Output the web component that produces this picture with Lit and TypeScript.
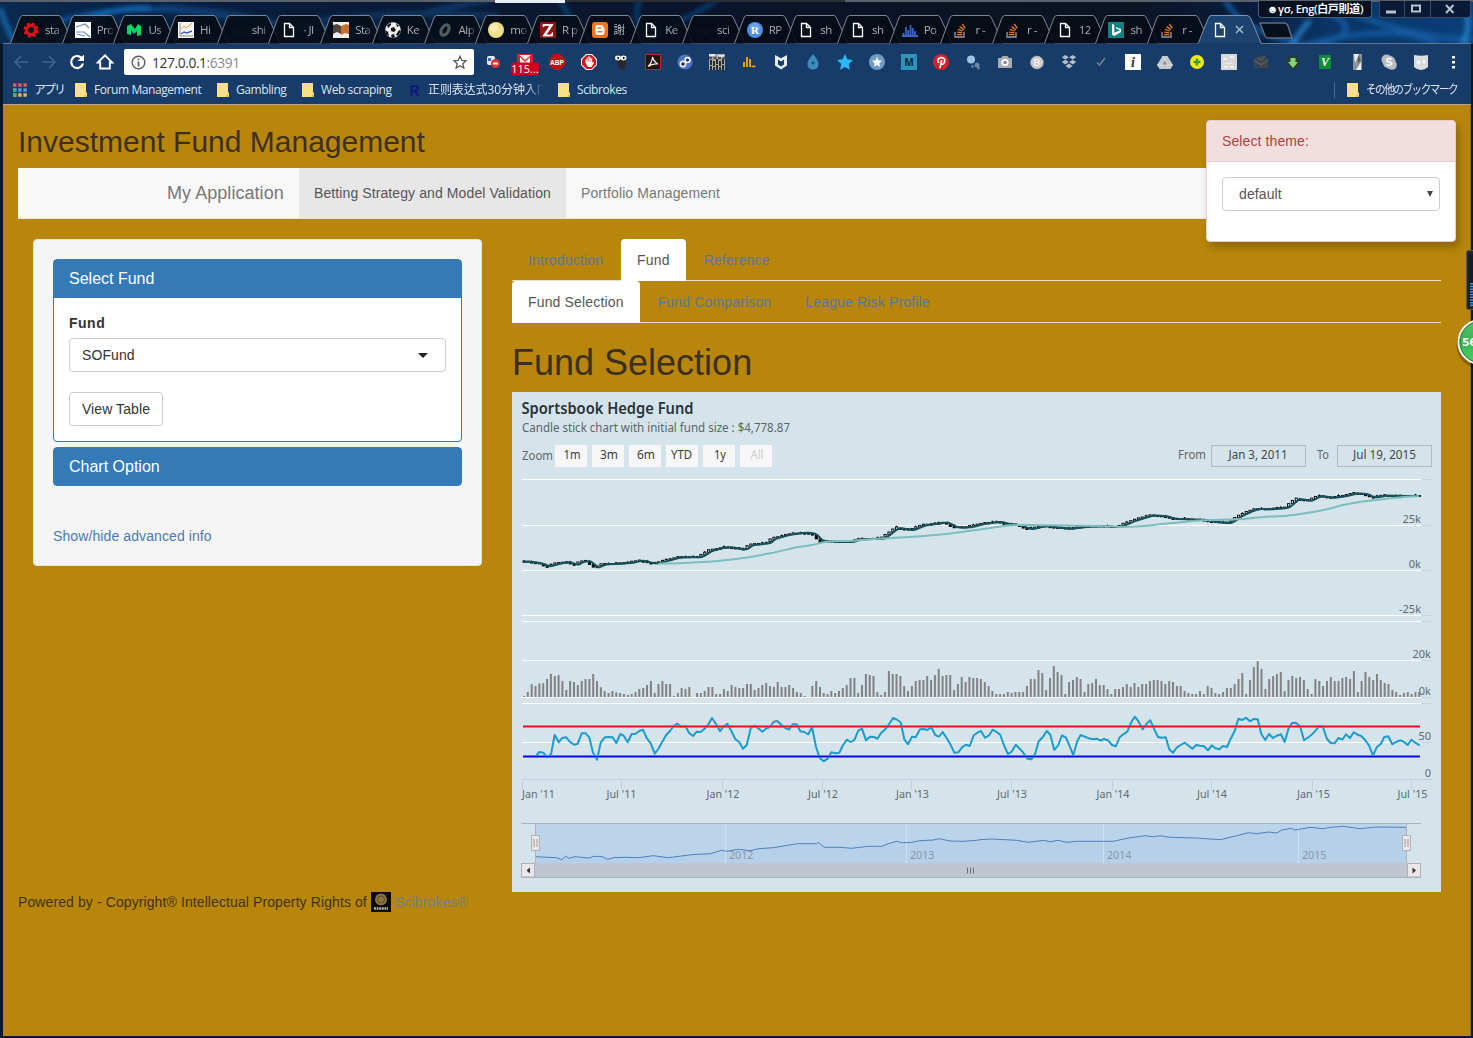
import { LitElement, html, svg, css } from "lit";
import { customElement } from "lit/decorators.js";

type Pt = [number, number];

/** Chart samples are stored at triple resolution, split in three runs. */
const RUNS = [0, 900, 1830];
const toPoints = (runs: string[], dx: number, dy: number, offsets = RUNS): Pt[] =>
  runs.flatMap((run, i) =>
    run.split(" ").map((p) => {
      const [x, y] = p.split(",").map(Number);
      return [(x + offsets[i]) / 3 + dx, y / 3 + dy] as Pt;
    })
  );
const join = (pts: Pt[]) => pts.map(([x, y]) => `${x.toFixed(1)},${y.toFixed(1)}`).join(" ");
const smooth = (pts: Pt[]) => {
  let d = `M${pts[0][0]},${pts[0][1]}`;
  for (let i = 0; i < pts.length - 1; i++) {
    const p0 = pts[Math.max(0, i - 1)], p1 = pts[i], p2 = pts[i + 1], p3 = pts[Math.min(pts.length - 1, i + 2)];
    const k = 7;
    d += `C${(p1[0] + (p2[0] - p0[0]) / k).toFixed(2)},${(p1[1] + (p2[1] - p0[1]) / k).toFixed(2)} ${(p2[0] - (p3[0] - p1[0]) / k).toFixed(2)},${(p2[1] - (p3[1] - p1[1]) / k).toFixed(2)} ${p2[0].toFixed(2)},${p2[1].toFixed(2)}`;
  }
  return d;
};
const yAt = (pts: Pt[], x: number) => {
  for (let i = 1; i < pts.length; i++) {
    if (x <= pts[i][0]) {
      const [x0, y0] = pts[i - 1], [x1, y1] = pts[i];
      return y0 + ((y1 - y0) * (x - x0)) / (x1 - x0);
    }
  }
  return pts[pts.length - 1][1];
};

const RSI = toPoints([
  "78,858 88,846 100,848 111,862 123,853 134,795 146,817 156,804 169,802 180,816 193,824 203,821 215,790 227,790 238,802 249,848 261,869 272,818 284,802 296,801 308,802 319,819 331,792 341,797 353,817 365,792 376,792 388,783 399,779 410,804 422,820 434,851 445,837 456,817 468,796 480,783 491,768 502,761 514,771 526,768 537,788 549,798 560,785 572,786 583,777 594,765 606,744 618,762 630,784 640,770 652,761 664,783 676,807 688,817 699,836 710,825 722,775 733,767 745,775 757,785 768,776 780,771 791,755 802,753 814,764 826,774 837,779 848,763 860,763 871,784 883,786 895,793 906,772",
  "18,830 29,864 41,874 53,866 64,847 76,850 88,848 99,826 110,809 122,816 133,810 145,782 156,776 168,811 180,800 192,801 202,806 214,788 226,778 237,763 249,744 261,749 272,757 283,808 294,823 306,800 317,802 330,778 341,777 352,780 364,772 376,795 387,800 398,786 410,805 422,825 433,848 445,847 456,832 468,824 479,828 491,796 502,788 513,783 525,803 536,797 548,779 560,786 571,795 583,828 594,852 606,844 617,824 629,836 640,848 652,866 664,868 675,853 686,814 698,802 710,783 721,794 733,840 745,825 756,796 768,803 779,829 790,855 802,813 812,795 824,800 836,805 848,808 860,806 871,812 882,807 894,811 906,825 917,829 929,802",
  "10,793 22,785 34,757 44,740 55,753 68,778 79,762 91,751 102,776 114,801 125,803 137,802 148,838 159,848 171,832 182,825 194,818 206,827 217,836 229,825 240,827 252,829 264,841 275,826 286,835 298,838 309,828 321,831 332,806 344,783 355,746 367,750 378,743 390,754 401,747 413,748 424,792 436,810 447,792 459,804 470,797 483,793 494,816 505,778 516,759 527,758 540,768 552,811 563,803 575,794 587,781 598,768 609,772 621,807 632,819 644,820 655,804 667,809 678,793 690,804 701,787 713,794 724,798 736,811 747,826 759,857 770,832 782,822 793,801 805,799 817,823 828,816 840,811 851,815 863,825 874,809 886,818 899,826",
], -2, 78);

const SMA = toPoints([
  "38,276 62,275 100,281 122,289 150,281 180,277 205,284 220,276 240,274 255,284 268,292 290,283 320,282 370,278 400,272 435,280 460,277 480,271 520,262 575,261 610,242 660,232 710,238 730,226 780,219 800,206 860,191 915,191",
  "40,212 80,215 125,216 160,208 220,206 240,195 270,175 310,180 345,167 390,161 415,158 442,171 480,172 520,163 570,156 605,163 635,166 665,177 710,169 760,174 790,176 830,171 880,169 929,171",
  "10,168 50,152 100,137 140,139 170,146 255,150 290,156 335,158 370,137 415,118 450,118 505,113 540,88 575,92 605,79 645,83 680,78 710,71 740,72 768,82 800,77 840,78 898,78",
], -2, 78);

const LONG_SMA = toPoints([
  "445,281 520,279 630,272 700,264 780,250 860,232",
  "0,226 60,214 120,213 180,208 300,201 400,193 500,180 600,166 660,165 720,166 900,169",
  "0,171 60,169 150,160 250,151 350,148 430,141 500,137 560,129 610,120 680,103 740,93 800,86 860,80 898,79",
], -2, 78);

const NAVIGATOR = toPoints([
  "77,230 140,233 155,239 167,228 176,235 195,230 237,234 252,229 277,230 293,238 312,233 345,232 385,233 430,227 475,233 545,224 600,221 635,211 650,214 685,208 720,212 745,206 790,203 820,198 862,191 920,191 925,187 943,202 990,202 1025,205 1075,199 1115,199 1135,191 1160,184 1175,188 1205,187 1230,182 1270,180 1288,176 1320,183 1360,184 1400,181",
  "30,179 65,177 140,181 175,187 220,181 240,185 265,181 290,187 320,184 430,184 475,174 525,167 550,170 570,167 600,172 680,174 750,179 800,167 835,158 860,161 895,156 920,159 935,150 965,145 975,150 1020,142 1060,146 1080,142 1120,139 1170,146 1220,141 1309,142",
], -2, 388, [0, 1380]);

const VOLUME: { from: number; to: number; h: number[] }[] = [
  { from: 42, to: 930, h: [3,15,38,33,41,41,54,69,63,66,48,21,48,45,36,48,54,54,69,48,29,18,12,18,14,12,9,6,9,15,24,27,36,48,12,39,48,39,39,3,12,27,24,30,0,12,12,18,30,30,9,9,24,18,36,30,27,27,39,39,21,27,36,42,33,30,45,30,30,36,27,15,12,3,0,33,48,30] },
  { from: 941, to: 1827, h: [12,9,18,12,18,27,36,57,57,12,36,69,66,63,15,6,15,78,69,69,63,33,18,33,48,51,51,63,51,66,84,63,66,66,21,39,60,45,60,57,57,54,45,33,18,9,9,9,15,12,15,15,15,33,54,54,81,72,21,57,93,75,66,9,45,51,60,54,15,39,42,54,36,36,24,9,24,24] },
  { from: 1839, to: 2728, h: [30,39,30,42,30,39,39,48,51,51,48,39,48,45,33,33,18,12,9,9,18,9,33,27,12,9,15,27,27,39,54,72,9,51,90,108,84,24,54,63,69,75,18,51,63,57,60,51,24,9,54,48,33,48,60,48,48,57,60,54,78,15,48,75,60,51,69,51,42,39,21,15,6,12,15,9,15,15] },
];
const BARS: Pt[] = VOLUME.flatMap(({ from, to, h }) =>
  h.map((v, i) => [(from + ((to - from) * i) / (h.length - 1)) / 3 - 2, v / 3] as Pt)
);

const page = svg`<path d="M3.5 1.5h5l4 4v9h-9z M8.5 1.5v4h4" fill="none" stroke="#fff" stroke-width="1.3"/>`;
const stack = svg`<path d="M2 10v5h9v-5" fill="none" stroke="#9a9a9a" stroke-width="1.3"/><path d="M4 12.6h5.3M4.2 10.2l5.2.6M4.9 7.4l5 1.6M6.6 4.6l4.3 3M9.3 1.8l3 4.6" stroke="#e87a24" stroke-width="1.3"/>`;
const dim = svg`<path d="M3 8l3 1 3-1 2 2 3-4v4l-4 2-5-1z" fill="#0c131c"/>`;

const FAVICONS: Record<string, unknown> = {
  gear: svg`<circle cx="8" cy="8" r="4.4" fill="none" stroke="#d9141c" stroke-width="3"/><circle cx="8" cy="8" r="6.4" fill="none" stroke="#d9141c" stroke-width="2.4" stroke-dasharray="3 2.02"/>`,
  sheet: svg`<rect width="16" height="16" fill="#fff"/><path d="M1 5l9-3 4 4M1 10h8l6 5M2 12l8 2" stroke="#6e8cae" stroke-width="1.2" fill="none"/>`,
  medium: svg`<path d="M1 4l4-2 4 5 3-5 3 2v9l-4 1V9l-3 3-3-4v5l-4-1z" fill="#02d968"/>`,
  lines: svg`<rect width="16" height="16" fill="#f6f6f2"/><path d="M2 1v13h13" stroke="#888" fill="none"/><path d="M3 7l3-3 2 2 3-2 3-3" stroke="#dca040" fill="none"/><path d="M3 12l3-2 3 1 5-2" stroke="#4060c0" fill="none" stroke-width="1.4"/>`,
  dim, page, stack,
  book: svg`<rect width="16" height="16" fill="#f4eee8"/><path d="M0 3l4-1 4 2v8l-4-2-4 2z" fill="#56443c"/><path d="M8 4l5-2 3 1v9l-4-1-4 2z" fill="#c8702c"/>`,
  ball: svg`<circle cx="8" cy="8" r="7.8" fill="#eee"/><path d="M6 6l3-1 2 3-2 2-3-1zM2 3l4-2v2L3 6zM11 1l3 3-2 1zM0 8l3 2 1 4-3-2zM14 8l2 1-3 5-2-1zM6 13l3-1 1 3-3 1z" fill="#111"/>`,
  loop: svg`<ellipse cx="8" cy="8" rx="3.4" ry="5.6" transform="rotate(30 8 8)" fill="none" stroke="#4e5b5e" stroke-width="3.2"/>`,
  moon: svg`<circle cx="8" cy="8" r="8" fill="#f0e08e"/><circle cx="6" cy="6" r="4" fill="#f8ecae"/>`,
  z: svg`<rect width="16" height="16" fill="#8c1414"/><path d="M3 5V2.500h10L6 13h5l1.500-2.500V14H3L10 3.500H5z" fill="#fff" stroke="#fff" stroke-width=".8"/>`,
  blogger: svg`<rect width="16" height="16" rx="3" fill="#f5751c"/><path d="M5 3h4q2.500 0 2.500 2.500l1 1V10q0 3-3 3H6q-2.500 0-2.500-2.500V5q0-2 1.500-2z" fill="#fff"/><path d="M6 6h2.400M6 9.800h4" stroke="#f5751c" stroke-width="1.500" stroke-linecap="round"/>`,
  r: svg`<circle cx="8" cy="8" r="8" fill="#4d8fe0"/><circle cx="8" cy="6" r="5" fill="#6aa6ee"/><text x="8" y="12" class="gr">R</text>`,
  hist: svg`<path d="M0 14h16M1.500 14v-3M4 14V5M6.200 14V8M8.500 14V3M10.800 14V6M13 14V9" stroke="#3a64c8" stroke-width="1.8"/>`,
  bing: svg`<rect width="16" height="16" fill="#0c8484"/><path d="M4 2l2.300.8v8L12 8.200 8.500 6.800 7.600 5l5.400 2v3L6.300 14 4 12.600z" fill="#fff"/>`,
};

const TABS: [string, string][] = [
  ["gear", "sta"], ["sheet", "Pro"], ["medium", "Us"], ["lines", "Hi"], ["dim", "shi"], ["page", "· JI"],
  ["book", "Sta"], ["ball", "Ke"], ["loop", "Alp"], ["moon", "mo"], ["z", "R p"], ["blogger", "謝"],
  ["page", "Ke"], ["dim", "sci"], ["r", "RP"], ["page", "sh"], ["page", "sh"], ["hist", "Po"],
  ["stack", "r -"], ["stack", "r -"], ["page", "12"], ["bing", "sh"], ["stack", "r -"],
];

const EXTENSIONS = [
  svg`<rect x="2" y="2" width="8" height="9" rx="2" fill="#e8ecf4"/><path d="M3 4h3v3H3z" fill="#2c6cd0"/><circle cx="10.500" cy="9.500" r="4.500" fill="#e0303a"/><path d="M8 9.500h5" stroke="#fff" stroke-width="2"/>`,
  svg`<rect x="0" y="0" width="16" height="9" fill="#d8202c"/><path d="M2 1h12v8H2z" fill="#f8eeee"/><path d="M1 0l7 6 7-6v9h-2V3L8 8 3 3v6H1z" fill="#d8202c"/><rect x="-6" y="8.500" width="28" height="12.500" rx="2" fill="#d0021b"/><text x="8" y="18.500" class="badge">115...</text>`,
  svg`<path d="M5 0h6l5 5v6l-5 5H5l-5-5V5z" fill="#c70d12"/><text x="8" y="10.700" class="abp" textLength="14" lengthAdjust="spacingAndGlyphs">ABP</text>`,
  svg`<path d="M5 0h6l5 5v6l-5 5H5l-5-5V5z" fill="#f4f4f4"/><path d="M5.500 1h5L15 5.500v5L10.500 15h-5L1 10.500v-5z" fill="#d8121c"/><path d="M4.500 9V5.500h1.300V3.500h1.400V2.500h1.400v1h1.400v1h1.200v4l1-.5q1 0 .6 1L10.500 13H7z" fill="#fff"/><path d="M6 4v4M7.500 3v5M9 4v4" stroke="#d8121c" stroke-width=".4"/>`,
  svg`<path d="M3 5q5-3 10-1v7q-1 5-4 5-4-1-6-11z" fill="#28282c"/><ellipse cx="5" cy="4" rx="3" ry="2.400" fill="#eee"/><ellipse cx="10.500" cy="4" rx="3" ry="2.400" fill="#eee"/><path d="M4.500 3h1.500v2H4.500zM10 3h1.500v2H10z" fill="#111"/>`,
  svg`<path d="M.5.500h15v15H.5z" fill="#221214" stroke="#c82030"/><path d="M7.500 3q1.500 5 5.500 7-5-1-10 2.500Q7 9 7.500 3z" fill="none" stroke="#eee" stroke-width="1.200"/>`,
  svg`<circle cx="8" cy="8" r="7.500" fill="#4e76c8"/><circle cx="6" cy="10" r="2.600" fill="#1c2c54" stroke="#eef" stroke-width="1.600"/><circle cx="10.500" cy="6" r="2.400" fill="#1c2c54" stroke="#eef" stroke-width="1.600"/>`,
  svg`<rect width="16" height="16" fill="#a8a8a4"/><path d="M0 1h6M9 2h6" stroke="#e8e8e4" stroke-width="2"/><path d="M0 4h16" stroke="#555" stroke-dasharray="3 1.500" stroke-width="2.500"/><path d="M2 6v10M5 7v9M8 5v11M11 7v9M14 5v11" stroke="#292c2c" stroke-width="2" stroke-dasharray="5 1"/>`,
  svg`<path d="M3 13V8M6 13V3M9 13V5" stroke="#f4a81c" stroke-width="1.800"/><path d="M10.500 12.400h4" stroke="#f4a81c" stroke-width="1.600"/>`,
  svg`<path d="M2 1l6 3.200L14 1v10.500L8 15.500l-6-4z" fill="#e8eaee"/><path d="M5 5.500l3 2 3-2v5L8 12.500l-3-2z" fill="#183c6a"/>`,
  svg`<path d="M8 0q6 7 5.500 10.500Q13 15.500 8 15.500t-5.500-5Q2 7 8 0z" fill="#3a8cb8"/><circle cx="8" cy="9" r="1.500" fill="#1c4c74"/>`,
  svg`<path d="M8 0l2.400 5.300 5.600.7-4.200 4 1.100 5.800L8 13l-4.900 2.800L4.200 10 0 6l5.600-.7z" fill="#2cb8f4"/>`,
  svg`<circle cx="8" cy="8" r="8" fill="#6f9cc4"/><path d="M8 3l1.500 3.300 3.500.4-2.600 2.500.7 3.600L8 11l-3.100 1.800.7-3.600L3 6.700l3.500-.4z" fill="#fff"/>`,
  svg`<rect width="16" height="16" fill="#2c94b8"/><text x="8" y="12" class="m">M</text>`,
  svg`<circle cx="8" cy="8" r="8" fill="#d8202c"/><path d="M7 14l1.700-8M5.500 9Q3.500 4.500 8 3.700q4-.2 3.800 3-.7 4-3.600 3.300" fill="none" stroke="#fff" stroke-width="1.700"/>`,
  svg`<circle cx="6" cy="5.500" r="4" fill="#9cc4e4"/><circle cx="12" cy="11" r="2.500" fill="#6c86a8"/><circle cx="7.500" cy="12.500" r="1.600" fill="#5878a0"/><circle cx="13.500" cy="14" r="1.400" fill="#6c86a8"/>`,
  svg`<path d="M1 4h3l1.500-2h5L12 4h3v10H1z" fill="#a8acb0"/><circle cx="8" cy="8.500" r="3.600" fill="#fff"/><circle cx="8" cy="8.500" r="1.800" fill="#82868a"/>`,
  svg`<circle cx="8" cy="8.500" r="6.500" fill="#ccc"/><circle cx="8" cy="8.500" r="6.500" fill="none" stroke="#aaa" stroke-dasharray="1 1"/><path d="M6 5.500h3q2 1.500 0 3 2 1.500 0 3H6zM6 8.500h3" fill="none" stroke="#f6f6f6" stroke-width="1.200"/>`,
  svg`<path d="M4.300 1l3.500 2.300L4.300 5.600.8 3.300zM11.700 1l3.500 2.300-3.500 2.300-3.500-2.300zM4.300 5.800l3.500 2.300-3.500 2.300L.8 8.100zM11.700 5.800l3.500 2.300-3.500 2.300-3.500-2.300zM8 9.500l3.500 2.400L8 14.500l-3.500-2.600z" fill="#b4bcc8"/>`,
  svg`<path d="M4 8.500l2.500 2.500L12 4" fill="none" stroke="#74808c" stroke-width="1.500"/>`,
  svg`<rect width="16" height="16" fill="#fff"/><text x="8" y="12.500" class="i">i</text>`,
  svg`<path d="M5.500 2h5L16 11l-2.500 4h-11L0 11z" fill="#c4c8cc"/><path d="M8 6.500l2.500 4.500h-5z" fill="#7c8894"/><path d="M5.500 2l5.500 9M0 11h16" stroke="#e0e2e4" stroke-width=".8"/>`,
  svg`<circle cx="8" cy="8" r="7" fill="#f0e814"/><path d="M8 4.500v7M4.500 8h7" stroke="#3c9c30" stroke-width="2.400"/>`,
  svg`<rect width="16" height="16" fill="#d8d8d8"/><path d="M2 4h4v2H2zM9 2h4v2H9zM4 9h7v1H4zM3 12h4v2H3zM9 12h4v2H9z" fill="#efefef"/>`,
  svg`<path d="M1 5l7-4 7 4v9H1z" fill="#3c444c"/><path d="M1 6l7 5 7-5M5 4l3 2 4-4" fill="none" stroke="#5a626a" stroke-width="1.100"/>`,
  svg`<circle cx="8" cy="8" r="7" fill="#243c3c"/><path d="M5.500 4h5v4H13l-5 6-5-6h2.500z" fill="#84d46c"/>`,
  svg`<rect x="2" y="1" width="12" height="14" fill="#0c8c34"/><text x="8" y="12" class="v">V</text>`,
  svg`<rect x="4" y="0" width="9" height="16" fill="#8a929a"/><path d="M5 0h5L6 9zM7 16l5-8v8z" fill="#eef0f2"/><path d="M9 1l3 5-3 3z" fill="#555"/>`,
  svg`<circle cx="5.500" cy="5.500" r="5" fill="#b8bcc0"/><circle cx="11" cy="11" r="4.800" fill="#b8bcc0"/><circle cx="8" cy="8" r="6.500" fill="#b8bcc0"/><path d="M10.800 5.500Q8 3.500 6 5.300q-1 2 2 2.600 3.600.7 2.400 2.600-2 1.700-5-.2" fill="none" stroke="#fff" stroke-width="1.500"/>`,
  svg`<path d="M1 1q7 1.500 14 0v12q-3 3-7 3t-7-3z" fill="#dcdee0"/><path d="M3 6h5v5H3zM9 5h4v5H9z" fill="#f4f4f4" stroke="#c0c4c8" stroke-width=".6"/>`,
];

@customElement("browser-chrome")
class BrowserChrome extends LitElement {
  static styles = css`
    :host { display: block; height: 105px; color: #dde4ee; font: 12px "Open Sans", "Noto Sans", "Noto Sans CJK JP", sans-serif; letter-spacing: 0; position: relative; }
    svg { display: block; overflow: visible; }
    .sky { position: absolute; inset: 0; z-index: 0; }
    .sky svg { overflow: hidden; }
    .strip { position: relative; height: 44px; display: flex; align-items: flex-end; padding-left: 10px; box-sizing: border-box; }
    .tab { width: 51.7px; height: 28px; flex: none; position: relative; display: flex; align-items: center; box-sizing: border-box; padding: 2px 0 0 13px; margin-bottom: 1px; color: #a9adb3; }
    .shape { position: absolute; left: 0; top: 0; }
    .fav { position: relative; flex: none; width: 16px; height: 16px; }
    .label { position: relative; margin-left: 6px; width: 17px; overflow: hidden; white-space: nowrap; font-size: 11.500px; letter-spacing: -.5px; line-height: 16px; -webkit-mask-image: linear-gradient(90deg, #000 60%, rgba(0, 0, 0, .2)); }
    .close { position: relative; margin-left: 7px; }
    .plus { margin: 0 0 5px 8px; }
    .window { position: absolute; top: 1px; right: 2px; display: flex; gap: 7px; height: 17px; }
    .user { box-sizing: border-box; width: 114px; border: 1px solid #4b5c76; border-top: 0; border-radius: 0 0 4px 4px; background: #07101f; color: #fff; font-size: 11px; line-height: 16px; text-align: center; white-space: nowrap; font-weight: 600; letter-spacing: -.3px; }
    .controls { display: flex; border: 1px solid #3c4c66; border-top: 0; border-radius: 0 0 4px 4px; background: #091a36; width: 92px; box-sizing: border-box; }
    .tools { position: relative; height: 37px; background: #183c6a; margin-left: 3px; margin-right: 2px; display: flex; align-items: center; padding-left: 10px; padding-bottom: 1px; box-sizing: border-box; }
    .nav { display: flex; gap: 12px; width: 111px; }
    .url { width: 350px; height: 26px; box-sizing: border-box; background: #fff; border-radius: 2px; display: flex; align-items: center; padding: 0 7px; color: #333; font-size: 13.800px; letter-spacing: -.4px; }
    .url b { font-weight: 400; color: #888; flex: 1; }
    .addr { margin-left: 6px; }
    .ext { display: flex; gap: 16px; margin-left: 11px; }
    .menu { margin-left: 21px; }
    .badge { font: 11px "Open Sans", sans-serif; fill: #fff; text-anchor: middle; }
    .abp { font: bold 8px "Liberation Sans", sans-serif; fill: #fff; text-anchor: middle; }
    .m { font: bold 11px "Liberation Sans", sans-serif; fill: #10243c; text-anchor: middle; }
    .i { font: italic bold 14px "Liberation Serif", serif; fill: #333; text-anchor: middle; }
    .v { font: italic bold 12px "Liberation Serif", serif; fill: #fff; text-anchor: middle; }
    .gr { font: bold 11px "Liberation Serif", serif; fill: #fff; text-anchor: middle; }
    .marks { position: relative; height: 23px; background: #183c6a; border-bottom: 1px solid #b9a98c; margin-left: 3px; margin-right: 2px; display: flex; align-items: center; padding-left: 10px; white-space: nowrap; letter-spacing: -.42px; }
    .mark { display: flex; align-items: center; gap: 7px; padding-bottom: 5px; flex: none; line-height: 18px; box-sizing: border-box; }
    .m0 { width: 62px; letter-spacing: -2px; } .m1 { width: 142px; } .m2 { width: 85px; } .m3 { width: 107px; } .m4 { width: 149px; letter-spacing: -.1px; }
    .fade { width: 116px; overflow: hidden; -webkit-mask-image: linear-gradient(90deg, #000 85%, transparent); }
    .grow { flex: 1; }
    .other { border-left: 1px solid #4c6a92; padding-left: 12px; height: 16px; margin-bottom: 5px; padding-bottom: 0; width: 137px; letter-spacing: -1.700px; }
    .narrow { transform: scaleX(.885); transform-origin: left; }
  `;

  private folder = svg`<svg width="12" height="14" viewBox="0 0 12 14"><path d="M0 0h11v9l1 1v4H0z" fill="#fbdf87"/><path d="M9 14l2-4 1 4z" fill="#eabf50"/></svg>`;

  render() {
    return html`
      <div class="sky">
        <svg width="1473" height="105">
          <defs>
            <linearGradient id="sky"><stop offset="0" stop-color="#0b2a50"/><stop offset=".12" stop-color="#081e40"/><stop offset=".3" stop-color="#0a1a34"/><stop offset=".5" stop-color="#0a142a"/><stop offset=".75" stop-color="#0c1322"/><stop offset=".85" stop-color="#0a1c3c"/><stop offset=".9" stop-color="#0a3464"/><stop offset="1" stop-color="#0a3e78"/></linearGradient>
            <filter id="soft" x="-5%" width="110%" y="-20%" height="140%"><feGaussianBlur stdDeviation="2.400"/></filter>
          </defs>
          <rect width="1473" height="105" fill="url(#sky)"/>
          <g fill="none" filter="url(#soft)">
            <path d="M50 24Q120 0 220 15T500 46" stroke="#0c5ca8" stroke-width="4"/>
            <path d="M0 8Q8 34 20 50M55 46Q90 6 150 8" stroke="#1878c8" stroke-width="4"/>
            <path d="M160 6Q280 14 330 46M200 46Q320 6 500 16M350 40Q400 14 490 0" stroke="#0c3462" stroke-width="6"/>
            <path d="M560 0Q570 20 590 46M715 2Q670 26 640 46M640 0Q630 20 650 46" stroke="#10549a" stroke-width="3"/>
            <path d="M1225 0Q1240 30 1300 44M1270 0Q1390 20 1320 46M1300 46Q1400 20 1440 46M1330 4Q1400 36 1473 40" stroke="#125aa0" stroke-width="5"/>
            <path d="M1460 0Q1475 20 1462 46M1310 20L1290 46" stroke="#2a8ad4" stroke-width="4"/>
          </g>
          <rect y="44" width="3" height="61" fill="#0a1526"/><rect x="1471" y="44" width="2" height="61" fill="#0a1526"/>
          <rect width="1473" height="2" fill="#59616c"/><rect x="565" width="280" height="2" fill="#2c3036"/><rect x="495" width="70" height="3" fill="#e6eef8"/>
          <path d="M3 43.500H1471" stroke="#66788f"/>
        </svg>
      </div>
      <div class="strip">
        ${TABS.map(([icon, label]) => html`
          <div class="tab">
            <svg class="shape" width="64" height="28"><path d="M.5 28.500L9.500 4Q10.500.5 12.500.5H49Q50.500.5 52 4L63 28.500" fill="#060c16" fill-opacity=".88" stroke="#7d858f"/></svg>
            <svg class="fav" viewBox="0 0 16 16">${FAVICONS[icon]}</svg><span class="label">${label}</span>
          </div>`)}
        <div class="tab">
          <svg class="shape" width="66" height="29"><path d="M-1 29L9 4Q10 .5 12 .5H48Q50.500.5 52 4L62.500 29" fill="#1c426f" stroke="#7f93ad"/><path d="M-.5 28H62V30H-1z" fill="#183c6a"/></svg>
          <svg class="fav" viewBox="0 0 16 16">${page}</svg>
          <svg class="close" width="10" height="10"><path d="M1 1l7 7M8 1L1 8" stroke="#aab6c6" stroke-width="1.500"/></svg>
        </div>
        <svg class="plus" width="36" height="17"><path d="M1 1H25Q28 1 29 4L33 16H9Q7 16 6 14z" fill="#08101e" stroke="#5f6d80" stroke-width="1.500"/></svg>
      </div>
      <div class="window">
        <div class="user">☻γσ, Eng(白戸則道)</div>
        <div class="controls"><svg width="90" height="16">
          <path d="M24.500 0v16M50.500 0v16" stroke="#3c4c66"/>
          <path d="M6 9.500h10v3H6z" fill="#b9c2ce"/><path d="M32 4.500h8v6h-8z" fill="none" stroke="#b9c2ce" stroke-width="2"/>
          <path d="M66 4l7.500 8M73.500 4L66 12" stroke="#b9c2ce" stroke-width="2"/></svg></div>
      </div>
      <div class="tools">
        <div class="nav">
          <svg width="16" height="16"><path d="M15 8H2M8 2L2 8l6 6" fill="none" stroke="#3f618c" stroke-width="1.700"/></svg>
          <svg width="16" height="16"><path d="M1 8h13M8 2l6 6-6 6" fill="none" stroke="#3f618c" stroke-width="1.700"/></svg>
          <svg width="16" height="16"><path d="M13.500 5.200A6 6 0 1 0 14 9.500" fill="none" stroke="#fff" stroke-width="2.200"/><path d="M15 .5v6.500H8.500z" fill="#fff"/></svg>
          <svg width="16" height="16"><path d="M.8 8.500L8 1.300l7.200 7.200H12.800V14.500H3.200V8.500z" fill="none" stroke="#fff" stroke-width="1.900"/></svg>
        </div>
        <div class="url">
          <svg width="15" height="15"><circle cx="7.500" cy="7.500" r="6.300" fill="none" stroke="#5c5c5c" stroke-width="1.400"/><path d="M7.500 6.500v5M7.500 3.500v1.700" stroke="#5c5c5c" stroke-width="1.700"/></svg>
          <span class="addr">127.0.0.1</span><b>:6391</b>
          <svg width="14" height="14" viewBox="0 0 16 16"><path d="M8 1.500l2 4.600 5 .5-3.800 3.300 1.200 5L8 12.300 3.600 14.900l1.200-5L1 6.600l5-.5z" fill="none" stroke="#5c5c5c" stroke-width="1.500"/></svg>
        </div>
        <div class="ext">${EXTENSIONS.map((e) => html`<svg width="16" height="16">${e}</svg>`)}</div>
        <svg class="menu" width="6" height="16"><path d="M2 2h3v2.600H2zM2 7h3v2.600H2zM2 12h3v2.600H2z" fill="#fff"/></svg>
      </div>
      <div class="marks">
        <div class="mark m0"><svg width="14" height="14"><path d="M0 2h14" stroke="#e05a5a" stroke-width="3.400" stroke-dasharray="3.400 1.800"/><path d="M0 7h14" stroke="#4a9ae8" stroke-width="3.400" stroke-dasharray="3.400 1.800"/><path d="M0 12h14" stroke="#e8b850" stroke-width="3.400" stroke-dasharray="3.400 1.800"/><path d="M0 7h3.400M0 12h3.400" stroke="#48b070" stroke-width="3.400"/></svg>アプリ</div>
        <div class="mark m1">${this.folder}Forum Management</div>
        <div class="mark m2">${this.folder}Gambling</div>
        <div class="mark m3">${this.folder}Web scraping</div>
        <div class="mark m4"><svg width="12" height="14"><path d="M2.500 13V3H7Q9.500 3 9 5.500T6 8H2.500M6 8L9 13" fill="none" stroke="#101878" stroke-width="2"/></svg><span class="fade">正则表达式30分钟入门</span></div>
        <div class="mark">${this.folder}Scibrokes</div>
        <div class="grow"></div>
        <div class="mark other">${this.folder}<span class="narrow">その他のブックマーク</span></div>
      </div>`;
  }
}

const CHART_BUTTONS: [string, number, number][] = [["1m", 43, 17], ["3m", 80, 18], ["6m", 117, 18], ["YTD", 154, 21], ["1y", 191, 12], ["All", 228, 13]];
const AXIS: [string, number, number][] = [
  ["Jan '11", 10, 26.500], ["Jul '11", 109, 109.500], ["Jan '12", 210.500, 211], ["Jul '12", 310.500, 311], ["Jan '13", 399.500, 400.500],
  ["Jul '13", 499.500, 500], ["Jan '14", 600.500, 601], ["Jul '14", 699.500, 700], ["Jan '15", 800.500, 801.500], ["Jul '15", 899.500, 900.500],
];

@customElement("stock-chart")
class StockChart extends LitElement {
  static styles = css`
    :host { display: block; width: 929px; height: 500px; background: #d5e4eb; letter-spacing: 0; }
    svg { display: block; }
    text { font-family: "Noto Sans", "Open Sans", sans-serif; font-size: 11px; fill: #3e576f; }
    .title { font-size: 15.500px; font-weight: 600; fill: #2b3338; }
    .sub { font-size: 12px; fill: #5b6469; }
    .btn { font-size: 12px; fill: #3c3c3c; }
    .off { fill: #ccc; }
    .lab { font-size: 12px; fill: #666; }
    .date { font-size: 12px; fill: #444; }
    .tick { font-size: 11px; fill: #606a70; }
    .year { font-size: 11.500px; fill: #8597a8; }
    .mid { text-anchor: middle; }
    .end { text-anchor: end; }
  `;

  render() {
    const handle = (x: number) => svg`<rect x="${x - 4}" y="443.500" width="8" height="15" fill="#ebe7e8" stroke="#b2b1b6"/><path d="M${x - 1.500} 447v8M${x + 1.500} 447v8" stroke="#999"/>`;
    return html`<svg width="929" height="500">
      <text class="title" x="9.500" y="22" textLength="172" lengthAdjust="spacingAndGlyphs">Sportsbook Hedge Fund</text>
      <text class="sub" x="10" y="40" textLength="268" lengthAdjust="spacingAndGlyphs">Candle stick chart with initial fund size : $4,778.87</text>
      <text class="lab" x="10" y="68" textLength="31" lengthAdjust="spacingAndGlyphs">Zoom</text>
      ${CHART_BUTTONS.map(([t, x, w]) => svg`<rect x="${x}" y="53" width="32" height="22" fill="#f7f7f7"/><text class="btn mid ${t === "All" ? "off" : ""}" x="${x + (t === "YTD" ? 15.500 : 17)}" y="67" textLength="${w}" lengthAdjust="spacingAndGlyphs">${t}</text>`)}
      <text class="lab" x="666" y="67" textLength="28" lengthAdjust="spacingAndGlyphs">From</text>
      <rect x="699.500" y="53.500" width="94" height="21" fill="none" stroke="#b0bcc2"/>
      <text class="date mid" x="746" y="67" textLength="59" lengthAdjust="spacingAndGlyphs">Jan 3, 2011</text>
      <text class="lab" x="805" y="67" textLength="12" lengthAdjust="spacingAndGlyphs">To</text>
      <rect x="825.500" y="53.500" width="94" height="21" fill="none" stroke="#b0bcc2"/>
      <text class="date mid" x="872.500" y="67" textLength="63" lengthAdjust="spacingAndGlyphs">Jul 19, 2015</text>

      ${[87.500, 133.500, 178.500, 223.500, 229.500, 268.500, 305.500, 311.500, 350.500].map((y) => svg`<path d="M10 ${y}H909" stroke="#fff"/><path d="M910 ${y}H920" stroke="#c6d6e0"/>`)}
      <path d="M10 387.500H920" stroke="#c0d0e0"/>
      ${AXIS.map(([t, x, c]) => svg`<path d="M${Math.floor(x) + .5} 388v10" stroke="#c0d0e0"/><text class="tick mid" x="${c}" y="406" textLength="${t.startsWith("Jan") ? 33 : 30}" lengthAdjust="spacingAndGlyphs">${t}</text>`)}

      ${BARS.map(([x, h]) => svg`<rect x="${(x - 1).toFixed(1)}" y="${(305 - h).toFixed(1)}" width="2" height="${h.toFixed(1)}" fill="#818283"/>`)}

      <path d="M11 334.500H908" stroke="#e8101c" stroke-width="2"/>
      <path d="M11 364.500H908" stroke="#0808e0" stroke-width="2"/>
      <polyline points="${join(RSI)}" fill="none" stroke="#1b9ccc" stroke-width="2" stroke-linejoin="round"/>
      <path d="M11 334.500H908" stroke="#e8101c" stroke-width="1"/>
      <path d="M11 364.500H908" stroke="#0808e0" stroke-width="1"/>

      ${BARS.map(([x], i) => {
        const now = yAt(SMA, x), ahead = yAt(SMA, x + 3.500);
        const half = Math.min(1.800, .5 + Math.abs(ahead - now) * .4);
        const y = ahead + (i % 4 === 0 ? -.4 : 0);
        return svg`<rect x="${(x - 1).toFixed(1)}" y="${(y - half).toFixed(1)}" width="2.200" height="${(half * 2).toFixed(1)}" fill="${ahead < now ? "#d5e4eb" : "#000"}" stroke="#000" stroke-width=".9"/>${i % 5 === 2 ? svg`<path d="M${x.toFixed(1)} ${(y - half - 1.200).toFixed(1)}v1.200" stroke="#000"/>` : ""}`;
      })}
      <path d="${smooth(SMA)}" fill="none" stroke="#14505e" stroke-width="2"/>
      <path d="${smooth(LONG_SMA)}" fill="none" stroke="#7cbdbd" stroke-width="2"/>

      ${([["25k", 909, 131], ["0k", 909, 176], ["-25k", 909, 221], ["20k", 919, 266], ["0k", 919, 303], ["50", 919, 348], ["0", 919, 385]] as [string, number, number][]).map(([t, x, y]) => svg`<text class="tick end" x="${x}" y="${y}">${t}</text>`)}

      <rect x="23" y="432" width="872" height="39" fill="#bbd4ea"/>
      <path d="M${join(NAVIGATOR).replace(/ /g, "L")}V471H23.700z" fill="#b2cde8" fill-opacity=".6"/>
      <path d="M213.500 432v39M394.500 432v39M591.500 432v39M786.500 432v39" stroke="#cfe2f2"/>
      ${([["2012", 217], ["2013", 398], ["2014", 595], ["2015", 790]] as [string, number][]).map(([t, x]) => svg`<text class="year" x="${x}" y="467" textLength="24.500" lengthAdjust="spacingAndGlyphs">${t}</text>`)}
      <polyline points="${join(NAVIGATOR)}" fill="none" stroke="#4c82bc" stroke-width="1"/>
      <path d="M9.500 431.500H909" stroke="#a8b5bf"/>
      <path d="M23.500 432v39M894.500 432v39" stroke="#b2b1b6"/>
      ${handle(23.500)}${handle(894.500)}
      <rect x="9.500" y="471.500" width="899" height="14" fill="#c0c6d1" stroke="#a9b0b8"/>
      <path d="M10 471.500H908" stroke="#bcc8d4"/>
      <rect x="9.500" y="471.500" width="13" height="13.500" fill="#ebe7e8" stroke="#b0b0b6"/><path d="M18 475.500v6l-3.500-3z" fill="#333"/>
      <rect x="895.500" y="471.500" width="13" height="13.500" fill="#ebe7e8" stroke="#b0b0b6"/><path d="M900.500 475.500v6l3.500-3z" fill="#333"/>
      <path d="M455.500 475.500v6M458.500 475.500v6M461.500 475.500v6" stroke="#6c7078"/>
    </svg>`;
  }
}

@customElement("app-root")
class AppRoot extends LitElement {
  static styles = css`
    :host { display: block; position: relative; width: 1473px; height: 1038px; overflow: hidden; background: #0a1a2c; font: 14px/20px "Liberation Sans", Arial, sans-serif; letter-spacing: .1px; color: #333; }
    * { box-sizing: border-box; }
    .page { margin: 0 2px 0 3px; height: 931px; background: #b8860b; padding: 0 30px 0 15px; border-right: 1px solid #8d6a18; }
    h1, h2 { margin: 0; font-weight: 400; white-space: nowrap; }
    h1 { font-size: 30px; line-height: 33px; padding-top: 20px; height: 63px; letter-spacing: 0; color: #3d3020; }
    .nav { display: flex; height: 51px; background: #f8f8f8; border-bottom: 1px solid #e9e6df; line-height: 50px; padding-left: 149px; color: #777; }
    .brand { font-size: 18px; width: 132px; white-space: nowrap; letter-spacing: .05px; }
    .item { padding: 0 15px; white-space: nowrap; }
    .item.on { background: #e7e7e7; color: #555; width: 267px; }
    .cols { display: flex; gap: 30px; padding: 20px 0 0 15px; height: 672px; }
    .well { flex: none; width: 449px; height: 327px; background: #f5f5f5; border: 1px solid #e3e3e3; border-radius: 4px; padding: 19px; }
    .panel { border: 1px solid #337ab7; border-radius: 4px; background: #fff; }
    .panel + .panel { margin-top: 5px; }
    .panel + .panel .ph { height: 37px; }
    .ph { background: #337ab7; color: #fff; font-size: 16px; line-height: 18px; padding: 10px 15px; height: 38px; letter-spacing: 0; }
    .body { padding: 15px; height: 143px; }
    .lbl { font-weight: 700; display: block; margin-bottom: 5px; letter-spacing: .5px; }
    .select { border: 1px solid #ccc; border-radius: 4px; height: 34px; padding: 6px 17px 6px 12px; display: flex; justify-content: space-between; align-items: center; }
    .caret { border: 5px solid transparent; border-top-color: #222; border-bottom: 0; }
    .button { display: inline-block; margin-top: 20px; border: 1px solid #ccc; border-radius: 4px; height: 34px; width: 94px; text-align: center; padding: 6px 0; }
    .link { color: #4a7ab4; display: block; margin-top: 40px; }
    .main { flex: none; width: 929px; }
    .tabs { display: flex; border-bottom: 1px solid #eadfc4; height: 42px; color: #57789a; letter-spacing: .16px; }
    .t { padding: 11px 16px 0; margin-right: 2px; height: 41px; white-space: nowrap; }
    .t.on { background: #fff; color: #555; border-radius: 4px 4px 0 0; height: 42px; }
    h2 { font-size: 36px; line-height: 40px; height: 69px; padding-top: 20px; letter-spacing: 0; color: #3d3020; }
    .foot { display: flex; align-items: center; height: 20px; margin-top: 1px; gap: 4px; color: #42330f; white-space: nowrap; }
    .foot a { color: #71808a; }
    .theme { position: absolute; left: 1206px; top: 120px; width: 250px; height: 122px; background: #fff; border: 1px solid #ebccd1; border-radius: 4px; box-shadow: 3px 5px 8px rgba(0, 0, 0, .25); }
    .th { background: #f2dede; color: #a94442; padding: 10px 15px; height: 41px; border-bottom: 1px solid #ebccd1; border-radius: 3px 3px 0 0; }
    .theme .select { margin: 15px; padding: 6px 6px 6px 16px; color: #555; }
    .tri { border: 3.500px solid transparent; border-top: 6px solid #444; border-bottom: 0; }
    .gadget { position: absolute; left: 1466px; top: 250px; }
    .orb { position: absolute; left: 1450px; top: 312px; }
    .orb text { font: bold 11px "DejaVu Sans", sans-serif; fill: #fff; letter-spacing: -.5px; }
    svg { display: block; }
  `;

  render() {
    return html`
      <browser-chrome></browser-chrome>
      <div class="page">
        <h1>Investment Fund Management</h1>
        <div class="nav"><span class="brand">My Application</span><span class="item on">Betting Strategy and Model Validation</span><span class="item">Portfolio Management</span></div>
        <div class="cols">
          <div class="well">
            <div class="panel"><div class="ph">Select Fund</div>
              <div class="body"><span class="lbl">Fund</span><div class="select">SOFund<i class="caret"></i></div><span class="button">View Table</span></div>
            </div>
            <div class="panel"><div class="ph">Chart Option</div></div>
            <a class="link">Show/hide advanced info</a>
          </div>
          <div class="main">
            <div class="tabs"><span class="t">Introduction</span><span class="t on">Fund</span><span class="t">Reference</span></div>
            <div class="tabs"><span class="t on">Fund Selection</span><span class="t">Fund Comparison</span><span class="t">League Risk Profile</span></div>
            <h2>Fund Selection</h2>
            <stock-chart></stock-chart>
          </div>
        </div>
        <div class="foot">Powered by - Copyright® Intellectual Property Rights of
          <svg width="20" height="20"><rect width="20" height="20" fill="#080806"/><circle cx="10" cy="7.500" r="6" fill="#8a7440"/><circle cx="10" cy="7.500" r="3.500" fill="none" stroke="#5c4c24"/><path d="M3 16.500h14" stroke="#b0b0a8" stroke-width="2.400" stroke-dasharray="2 .6"/></svg>
          <a>Scibrokes®</a></div>
      </div>
      <div class="theme"><div class="th">Select theme:</div><div class="select">default<i class="tri"></i></div></div>
      <svg class="gadget" width="7" height="60"><rect x=".5" y=".5" width="12" height="59" rx="2" fill="#23282e" stroke="#55595c"/><rect x="3" y="4" width="4" height="52" fill="#161b2c"/><path d="M5.500 33v23" stroke="#3a9ad0" stroke-width="3" stroke-dasharray="1.500 1.200"/></svg>
      <svg class="orb" width="23" height="62">
        <defs><linearGradient id="g" x2="0" y2="1"><stop offset="0" stop-color="#5cc070"/><stop offset=".5" stop-color="#35b452"/><stop offset="1" stop-color="#4fd468"/></linearGradient></defs>
        <circle cx="30.500" cy="33" r="24" fill="#000" opacity=".25"/><circle cx="30.500" cy="30" r="22" fill="url(#g)" stroke="#f2f2ee" stroke-width="2"/><circle cx="30.500" cy="30" r="20.500" fill="none" stroke="#2c7c4c"/>
        <text x="12" y="33.500">56</text></svg>`;
  }
}
